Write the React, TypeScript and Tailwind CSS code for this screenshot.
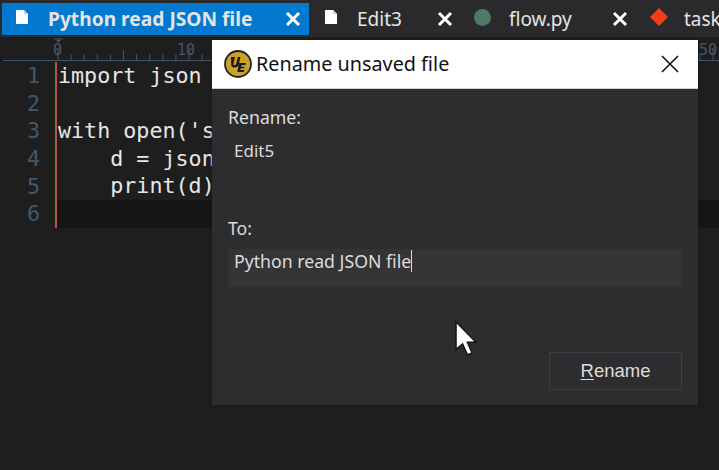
import React from "react";

const sans = "font-['Noto_Sans','Open_Sans',sans-serif]";

function FileIcon() {
  return (
    <svg width="14" height="16" viewBox="0 0 14 16" className="mb-[4px] shrink-0">
      <path d="M1 1h8l4 4v10H1z" fill="#fff" />
      <path d="M9 1v4h4" fill="#cfcfcf" />
    </svg>
  );
}

function CloseX({ className = "" }: { className?: string }) {
  return (
    <svg width="16" height="16" viewBox="0 0 16 16" className={"shrink-0 " + className}>
      <path d="M2 2l12 12M14 2L2 14" stroke="#fff" strokeWidth="3" fill="none" />
    </svg>
  );
}

function Ruler() {
  const ticks = [];
  for (let i = 0; i < 52; i++) {
    const x = 58 + i * 13.1;
    ticks.push(<line key={i} x1={x} x2={x} y1={i % 5 === 0 ? 19 : 23} y2={29} stroke="#3f5468" strokeWidth="1" />);
  }
  return (
    <div className="relative h-[25px] w-full">
      <svg width="719" height="30" className="absolute left-0 top-[-6px]">
        <line x1="3" x2="719" y1="29.5" y2="29.500" stroke="#3f5468" />
        <path d="M54 8h9" stroke="#3f5468" strokeWidth="1" />
        <path d="M56 9h5l-2.500 3z" fill="#3f5468" />
        {ticks}
      </svg>
      <span className="absolute left-[53px] top-[4px] font-['DejaVu_Sans_Mono',monospace] text-[15px] leading-[18px] text-[#44586b]">0</span>
      <span className="absolute left-[177px] top-[4px] font-['DejaVu_Sans_Mono',monospace] text-[15px] leading-[18px] text-[#44586b]">10</span>
      <span className="absolute left-[699px] top-[4px] font-['DejaVu_Sans_Mono',monospace] text-[15px] leading-[18px] text-[#44586b]">50</span>
    </div>
  );
}

function CodeLine({ n, text, current }: { n: number; text: string; current?: boolean }) {
  return (
    <div className="flex h-[27.6px] items-center">
      <div className="w-[40px] text-right text-[#44586b]">{n}</div>
      <div className="ml-[15px] h-full w-[2px] bg-[#b5573a]" />
      <div className={"h-full flex-1 whitespace-pre pl-[1px] text-[#e6e6e6] " + (current ? "bg-[#151515]" : "")}>{text}</div>
    </div>
  );
}

function Logo() {
  return (
    <svg width="28" height="28" viewBox="0 0 28 28" className="shrink-0">
      <circle cx="14" cy="14" r="13" fill="#c9a227" stroke="#222" strokeWidth="1.8" />
      <path d="M7 7h4l-1.600 7c-.3 1.600 2.400 1.600 2.800 0L13.800 7h2.600l-1.800 8c-.8 3.400-8 3.400-7.300-.3z" fill="#1a1a1a" />
      <path d="M15 13h7l-.5 2h-4l-.4 1.700h3.400l-.4 1.600h-3.400l-.4 1.700h4l-.5 2h-6.500z" fill="#1a1a1a" />
    </svg>
  );
}

export default function App() {
  return (
    <div className={"relative h-[470px] w-[719px] overflow-hidden bg-[#1e1e1f] " + sans}>
      {/* Tabs */}
      <div className="flex h-[37px] items-stretch overflow-hidden bg-[#2a2a2c] pt-[3px] pb-[2px] pl-[2px]">
        <div className="flex w-[307px] shrink-0 items-center bg-[#0278cf] pl-[13px] pr-[8px]">
          <FileIcon />
          <span className="ml-[19px] flex-1 whitespace-nowrap text-[19.2px] font-bold text-[#e4e4e4]">Python read JSON file</span>
          <CloseX />
        </div>
        <div className="flex w-[151px] shrink-0 items-center pl-[15px] pr-[7px] text-[#e4e4e4]">
          <FileIcon />
          <span className="ml-[19px] flex-1 text-[19px]">Edit3</span>
          <CloseX />
        </div>
        <div className="flex w-[174px] shrink-0 items-center pl-[14px] pr-[6px] text-[#e4e4e4]">
          <span className="mb-[4px] h-[17px] w-[17px] shrink-0 rounded-full bg-[#4e7a63]" />
          <span className="ml-[18px] flex-1 text-[19px]">flow.py</span>
          <CloseX />
        </div>
        <div className="flex flex-1 items-center pl-[15px] text-[#e4e4e4]">
          <svg width="20" height="20" viewBox="0 0 20 20" className="mb-[4px] shrink-0">
            <path d="M10 1l9 9-9 9-9-9z" fill="#f13f18" />
          </svg>
          <span className="ml-[15px] text-[19px]">task</span>
        </div>
      </div>

      {/* Editor */}
      <Ruler />
      <div className="font-['DejaVu_Sans_Mono',monospace] text-[21.7px] leading-[27px]">
        <CodeLine n={1} text="import json" />
        <CodeLine n={2} text="" />
        <CodeLine n={3} text="with open('s" />
        <CodeLine n={4} text="    d = json" />
        <CodeLine n={5} text="    print(d)" />
        <CodeLine n={6} text="" current />
      </div>

      {/* Dialog */}
      <div className="absolute left-[212px] top-[40px] flex h-[365px] w-[486px] flex-col bg-[#2d2d30] shadow-[0_0_2px_#141414]">
        <div className="flex h-[49px] shrink-0 items-center border-b border-[#d0d0d0] bg-white pl-[12px] pr-[18px]">
          <Logo />
          <span className="ml-[4px] flex-1 text-[19.8px] text-[#111]">Rename unsaved file</span>
          <svg width="20" height="20" viewBox="0 0 20 20">
            <path d="M2 2l16 16M18 2L2 18" stroke="#111" strokeWidth="1.6" fill="none" />
          </svg>
        </div>
        <div className="flex flex-1 flex-col px-[16px] pt-[16px] text-[17.7px] text-[#dcdcdc]">
          <div className="h-[24px] leading-[24px]">Rename:</div>
          <div className="mt-[10px] h-[24px] pl-[6px] leading-[24px] text-[17px]">Edit5</div>
          <div className="mt-[53px] h-[24px] leading-[24px]">To:</div>
          <div className="mt-[9px] flex h-[38px] w-[454px] items-start bg-[#343437] pl-[6px] leading-[24px]">
            <span>Python read JSON file</span>
            <span className="mt-[1px] h-[22px] w-[1px] bg-[#dcdcdc]" />
          </div>
          <div className="mt-[65px] flex justify-end">
            <div className="flex h-[38px] w-[133px] items-center justify-center border border-[#3d3f45] font-['Liberation_Sans',sans-serif] text-[18.500px] text-[#dcdcdc]">
              <span><span className="underline underline-offset-2">R</span>ename</span>
            </div>
          </div>
        </div>
      </div>

      {/* Pointer */}
      <svg width="24" height="36" viewBox="0 0 22 33" className="absolute left-[455px] top-[321px]">
        <path d="M1 1v25l6-5 4.500 10 4-1.800-4.300-9.700h8z" fill="#fff" stroke="#111" strokeWidth="1.200" />
      </svg>
    </div>
  );
}
